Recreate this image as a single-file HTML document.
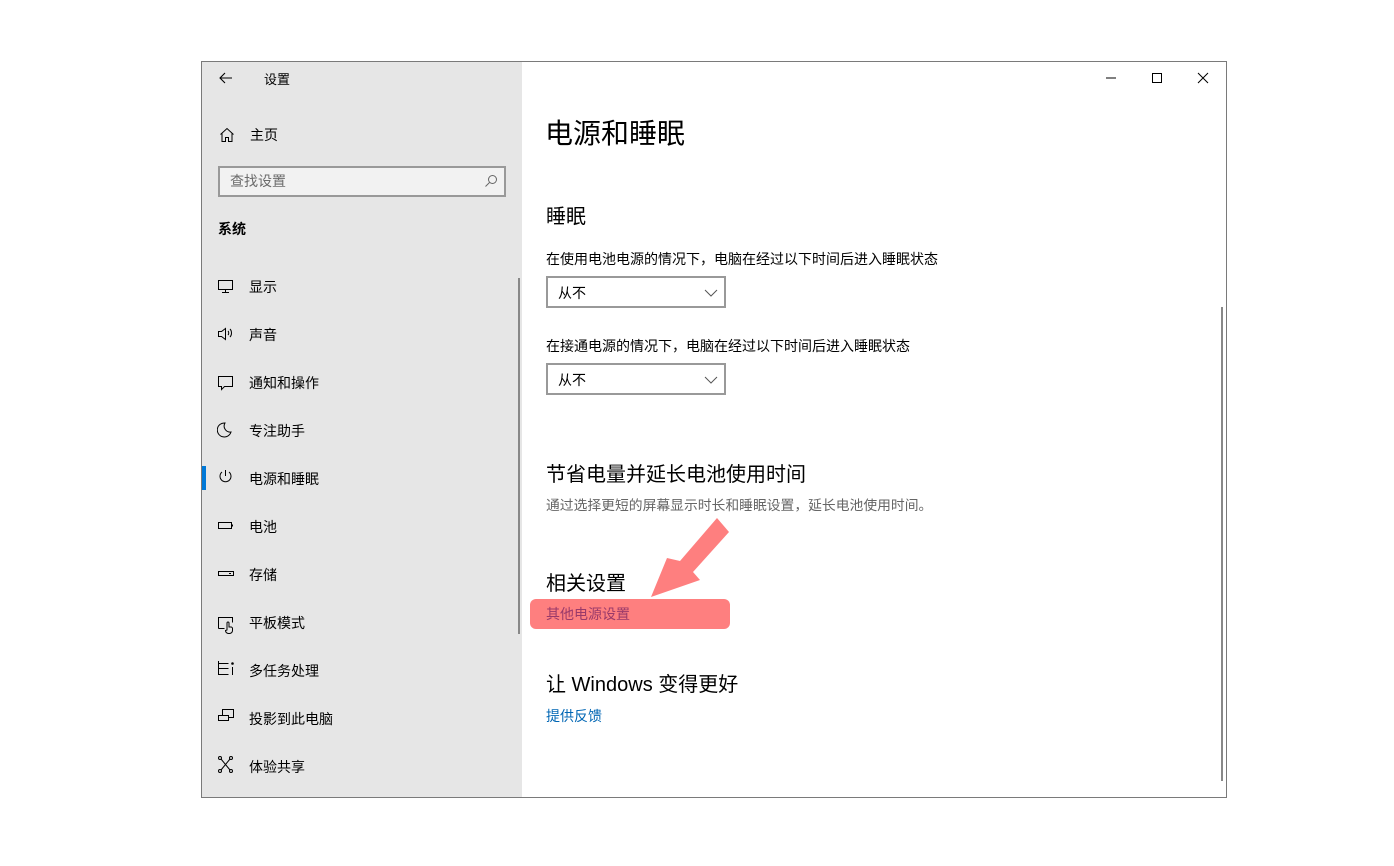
<!DOCTYPE html>
<html><head><meta charset="utf-8"><style>
*{margin:0;padding:0;box-sizing:border-box}
body{width:1394px;height:866px;background:#fff;position:relative;overflow:hidden;font-family:"Liberation Sans","Noto Sans CJK SC",sans-serif;color:#000}
.a{position:absolute;white-space:nowrap}
#win{position:absolute;left:201px;top:61px;width:1026px;height:737px;border:1px solid #7a7a7a;background:#fff}
#side{position:absolute;left:202px;top:62px;width:320px;height:735px;background:#e6e6e6}
.nav{font-size:14px;line-height:20px}
.ic{position:absolute}
.t13{font-size:14px;line-height:18px}
.dd{position:absolute;width:180px;height:32px;border:2px solid #999;background:#fff;font-size:14px}
</style></head><body>
<div id="win"></div>
<div id="side"></div>
<svg class="ic" style="left:218px;top:70px" width="16" height="16" viewBox="0 0 16 16"><path d="M14 8H2M7 3L2 8l5 5" fill="none" stroke="#000" stroke-width="1.1"/></svg>
<div class="a" style="left:264px;top:69px;font-size:13px">设置</div>
<svg class="ic" style="left:1100px;top:70px" width="120" height="16"><path d="M6 8h10" stroke="#000"/><rect x="52.5" y="3.5" width="9" height="9" fill="none" stroke="#000"/><path d="M98 3l10 10M108 3L98 13" stroke="#000"/></svg>
<svg class="ic" style="left:219px;top:127px" width="16" height="16" viewBox="0 0 16 16"><path d="M1.5 7.5L8 1.5l6.5 6M3 6.5v8h3.5v-4h3v4H13v-8" fill="none" stroke="#000" stroke-width="1"/></svg>
<div class="a nav" style="left:250px;top:125px">主页</div>
<div class="a" style="left:218px;top:166px;width:288px;height:31px;border:2px solid #999;background:#f2f2f2"></div>
<div class="a" style="left:230px;top:171px;font-size:14px;color:#6b6b6b">查找设置</div>
<svg class="ic" style="left:484px;top:174px" width="14" height="14"><circle cx="8.5" cy="5.5" r="4" fill="none" stroke="#666"/><path d="M5.5 8.5L1.5 12.5" stroke="#666"/></svg>
<div class="a" style="left:218px;top:219px;font-size:14px;font-weight:bold">系统</div>
<div class="a" style="left:518px;top:278px;width:2px;height:356px;background:#888"></div>
<div class="a nav" style="left:249px;top:277px">显示</div>
<div class="a nav" style="left:249px;top:325px">声音</div>
<div class="a nav" style="left:249px;top:373px">通知和操作</div>
<div class="a nav" style="left:249px;top:421px">专注助手</div>
<div class="a nav" style="left:249px;top:469px">电源和睡眠</div>
<div class="a nav" style="left:249px;top:517px">电池</div>
<div class="a nav" style="left:249px;top:565px">存储</div>
<div class="a nav" style="left:249px;top:613px">平板模式</div>
<div class="a nav" style="left:249px;top:661px">多任务处理</div>
<div class="a nav" style="left:249px;top:709px">投影到此电脑</div>
<div class="a nav" style="left:249px;top:757px">体验共享</div>
<div class="a" style="left:202px;top:466px;width:4px;height:24px;background:#0078d7"></div>
<svg class="ic" style="left:217px;top:278px" width="18" height="500" fill="none" stroke="#000" stroke-width="1">
<rect x="1.5" y="2.5" width="14" height="9"/><path d="M8.5 11.5v3M5 14.5h7"/>
<path d="M1.5 53.5h3l4-3v11l-4-3h-3z M11 53c1 1 1 3 0 4M13 51c2 2 2 6 0 8"/>
<path d="M1.5 98.5h14v10h-8l-3 3v-3h-3z"/>
<path d="M8 145a7 7 0 1 0 6 9a6 6 0 0 1-6-9z"/>
<path d="M8.5 192v6M5 194a5.5 5.5 0 1 0 7 0"/>
<rect x="1.5" y="244.5" width="13" height="6"/><path d="M15.5 246.5v2"/>
<rect x="1.5" y="293.5" width="15" height="4"/><path d="M12 295.5h2"/>
<path d="M1.5 350.5v-11h14v5M1.5 350.5h6M10 352v-7a1 1 0 0 1 2 0v4h2a1.5 1.5 0 0 1 1.5 1.5v2a3 3 0 0 1-3 3h-1a3 3 0 0 1-3-3z"/>
<path d="M1.5 383v14M1.5 390.5h10M1.5 385.5h10M1.5 396.5h10M15.5 389v8"/><circle cx="15.5" cy="385.5" r="0.8" fill="#000"/>
<path d="M5.5 437.5v-6h11v8h-5M1.5 437.5h10v5h-10z"/>
<circle cx="3" cy="480" r="1.5"/><circle cx="14" cy="480" r="1.5"/><circle cx="3" cy="493" r="1.5"/><circle cx="14" cy="493" r="1.5"/><path d="M4 481l9 11M13 481l-9 11"/>
</svg>
<div class="a" style="left:545px;top:114px;font-size:28px;line-height:40px">电源和睡眠</div>
<div class="a" style="left:546px;top:203px;font-size:20px;line-height:28px">睡眠</div>
<div class="a t13" style="left:546px;top:250px">在使用电池电源的情况下，电脑在经过以下时间后进入睡眠状态</div>
<div class="dd" style="left:546px;top:276px"><span class="a" style="left:10px;top:5px">从不</span><svg class="ic" style="left:156px;top:10px" width="14" height="10"><path d="M1 2l6 6 6-6" fill="none" stroke="#555"/></svg></div>
<div class="a t13" style="left:546px;top:337px">在接通电源的情况下，电脑在经过以下时间后进入睡眠状态</div>
<div class="dd" style="left:546px;top:363px"><span class="a" style="left:10px;top:5px">从不</span><svg class="ic" style="left:156px;top:10px" width="14" height="10"><path d="M1 2l6 6 6-6" fill="none" stroke="#555"/></svg></div>
<div class="a" style="left:546px;top:461px;font-size:20px;line-height:28px">节省电量并延长电池使用时间</div>
<div class="a t13" style="left:546px;top:497px;color:#666;font-size:13.8px">通过选择更短的屏幕显示时长和睡眠设置，延长电池使用时间。</div>
<div class="a" style="left:546px;top:570px;font-size:20px;line-height:28px">相关设置</div>
<div class="a" style="left:530px;top:599px;width:200px;height:30px;background:#fe7f7f;border-radius:6px"></div>
<div class="a t13" style="left:546px;top:605px;color:#9a3a6a">其他电源设置</div>
<svg class="ic" style="left:0;top:0" width="1394" height="866"><polygon points="651,597 667,558 680,561 717,518 729,532 693,572 700,580" fill="#fe7f7f"/></svg>
<div class="a" style="left:546px;top:671px;font-size:20px;line-height:28px">让 Windows 变得更好</div>
<div class="a t13" style="left:546px;top:707px;color:#0066b4">提供反馈</div>
<div class="a" style="left:1221px;top:307px;width:2px;height:474px;background:#888"></div>
</body></html>
